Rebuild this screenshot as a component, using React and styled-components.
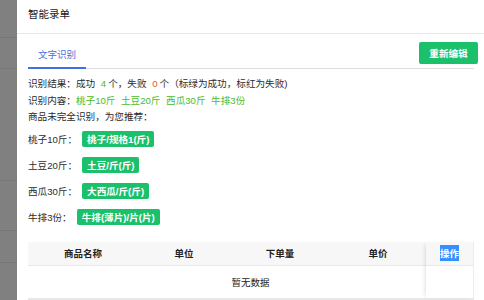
import React from 'react';
import styled, { createGlobalStyle } from 'styled-components';

const GlobalStyle = createGlobalStyle`
  html, body {
    margin: 0;
    padding: 0;
    background: #fff;
    overflow: hidden;
  }
  body {
    font-family: "Liberation Sans", "Noto Sans CJK SC", sans-serif;
    color: rgba(0, 0, 0, 0.85);
  }
`;

const Page = styled.div`
  display: flex;
  width: 484px;
  height: 300px;
  overflow: hidden;
`;

const Mask = styled.div`
  width: 17px;
  flex-shrink: 0;
  background: #808080;
  display: flex;
  flex-direction: column;
`;

const MaskRow = styled.div`
  height: ${p => p.h}px;
  flex-shrink: 0;
  border-bottom: 1px solid #777;
`;

const Modal = styled.div`
  flex: 1;
  background: #fff;
  display: flex;
  flex-direction: column;
`;

const Header = styled.div`
  height: 34px;
  box-sizing: border-box;
  padding: 6px 11px 0;
  border-bottom: 1px solid #e8e8e8;
  font-size: 10.5px;
  line-height: 16px;
  color: #1a1a1a;
`;

const Body = styled.div`
  padding: 0 11px;
`;

const TabBar = styled.div`
  display: flex;
  align-items: flex-end;
  justify-content: space-between;
  height: 34px;
  border-bottom: 1px solid #dcdee2;
`;

const Tab = styled.div`
  font-size: 9.5px;
  color: #3f72e0;
  padding: 0 10px;
  height: 21px;
  line-height: 14px;
  box-sizing: border-box;
  border-bottom: 2px solid #3f72e0;
  margin-bottom: -1px;
`;

const EditButton = styled.button`
  align-self: flex-start;
  margin-top: 8px;
  margin-right: -4px;
  width: 59px;
  height: 22px;
  border: none;
  border-radius: 2px;
  background: #1bc06b;
  color: #fff;
  font-family: inherit;
  font-size: 9.6px;
  font-weight: bold;
  padding: 0;
`;

const Info = styled.div`
  margin-top: 7px;
  font-size: 9.6px;
  line-height: 16.5px;
  color: #2b2b2b;
`;

const Line = styled.div`
  white-space: nowrap;
`;

const Num = styled.span`
  color: ${p => (p.red ? '#f0532d' : '#4cbb23')};
  margin: 0 2px 0 3px;
`;

const Word = styled.span`
  color: #4cbb23;
  margin-right: 5.6px;
`;

const SuggestRow = styled.div`
  display: flex;
  align-items: center;
  gap: 5px;
  height: 26.25px;
  font-size: 9.6px;
  color: #2b2b2b;
`;

const Label = styled.span`
  white-space: nowrap;
`;

const Tag = styled.span`
  display: inline-flex;
  align-items: center;
  height: 16px;
  padding: 0 5px;
  border-radius: 2px;
  background: #1bc06b;
  color: #fff;
  font-size: 9.6px;
  font-weight: bold;
  white-space: nowrap;
`;

const Table = styled.div`
  margin-top: 11px;
  display: flex;
  border-bottom: 2px solid #e8e8e8;
  font-size: 9.5px;
  color: #222;
`;

const ScrollPart = styled.div`
  flex: 1;
  display: flex;
  flex-direction: column;
`;

const HeadRow = styled.div`
  display: flex;
  height: 23px;
  background: #f7f7f7;
  border-bottom: 1px solid #e8e8e8;
`;

const HeadCell = styled.div`
  width: ${p => p.w}px;
  display: flex;
  align-items: center;
  justify-content: center;
  font-weight: bold;
`;

const EmptyRow = styled.div`
  height: 32px;
  display: flex;
  align-items: center;
  justify-content: center;
`;

const FixedCol = styled.div`
  width: 47px;
  display: flex;
  flex-direction: column;
  background: #fff;
  box-shadow: -3px 0 4px -2px rgba(0, 0, 0, 0.12);
  border-right: 1px solid #ececec;
  margin-left: -47px;
  position: relative;
`;

const FixedHead = styled.div`
  height: 23px;
  background: #f7f7f7;
  border-bottom: 1px solid #e8e8e8;
  display: flex;
  align-items: center;
  justify-content: center;
  font-weight: bold;
`;

const Selected = styled.span`
  background: #3390ff;
  color: #fff;
  padding: 1px 0;
`;

const suggestions = [
  { label: '桃子10斤：', tag: '桃子/规格1(斤)' },
  { label: '土豆20斤：', tag: '土豆/斤(斤)' },
  { label: '西瓜30斤：', tag: '大西瓜/斤(斤)' },
  { label: '牛排3份：', tag: '牛排(薄片)/片(片)' },
];

const columns = [
  { title: '商品名称', w: 110 },
  { title: '单位', w: 92 },
  { title: '下单量', w: 100 },
  { title: '单价', w: 96 },
  { title: '', w: 47 },
];

const words = ['桃子10斤', '土豆20斤', '西瓜30斤', '牛排3份'];

const App = () => {
  return (
    <Page>
      <GlobalStyle />
      <Mask>
        <MaskRow h={37} />
        <MaskRow h={30} />
        <MaskRow h={111} />
        <MaskRow h={49} />
        <MaskRow h={31} />
      </Mask>
      <Modal>
        <Header>智能录单</Header>
        <Body>
          <TabBar>
            <Tab>文字识别</Tab>
            <EditButton>重新编辑</EditButton>
          </TabBar>
          <Info>
            <Line>
              识别结果：成功 <Num>4</Num>个，失败 <Num red>0</Num>个（标绿为成功，标红为失败)
            </Line>
            <Line>
              识别内容：{words.map(w => <Word key={w}>{w}</Word>)}
            </Line>
            <Line>商品未完全识别，为您推荐：</Line>
          </Info>
          {suggestions.map(s => (
            <SuggestRow key={s.label}>
              <Label>{s.label}</Label>
              <Tag>{s.tag}</Tag>
            </SuggestRow>
          ))}
          <Table>
            <ScrollPart>
              <HeadRow>
                {columns.map((c, i) => (
                  <HeadCell key={i} w={c.w}>{c.title}</HeadCell>
                ))}
              </HeadRow>
              <EmptyRow>暂无数据</EmptyRow>
            </ScrollPart>
            <FixedCol>
              <FixedHead>
                <Selected>操作</Selected>
              </FixedHead>
            </FixedCol>
          </Table>
        </Body>
      </Modal>
    </Page>
  );
};

export default App;
